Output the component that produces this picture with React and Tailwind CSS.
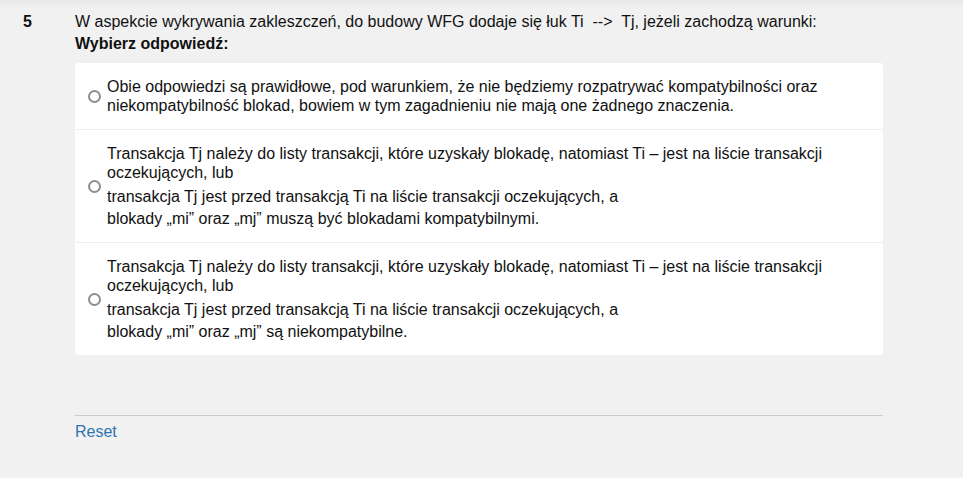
const options = [
  {
    first: "Obie odpowiedzi są prawidłowe, pod warunkiem, że nie będziemy rozpatrywać kompatybilności oraz niekompatybilność blokad, bowiem w tym zagadnieniu nie mają one żadnego znaczenia.",
    rest: [],
  },
  {
    first: "Transakcja Tj należy do listy transakcji, które uzyskały blokadę, natomiast Ti – jest na liście transakcji oczekujących, lub",
    rest: [
      "transakcja Tj jest przed transakcją Ti na liście transakcji oczekujących, a",
      "blokady „mi” oraz „mj” muszą być blokadami kompatybilnymi.",
    ],
  },
  {
    first: "Transakcja Tj należy do listy transakcji, które uzyskały blokadę, natomiast Ti – jest na liście transakcji oczekujących, lub",
    rest: [
      "transakcja Tj jest przed transakcją Ti na liście transakcji oczekujących, a",
      "blokady „mi” oraz „mj” są niekompatybilne.",
    ],
  },
];

function Radio() {
  return (
    <span className="block h-[13px] w-[13px] shrink-0 rounded-full border-2 border-[#8d8d8d] bg-white" />
  );
}

export default function App() {
  return (
    <div className="min-h-[478px] w-full bg-[#f1f1f1] bg-[linear-gradient(to_bottom,#e7e7e7_0px,#f1f1f1_9px)] font-['Liberation_Sans',Arial,sans-serif] text-[16px] leading-[19px] text-[#111111]">
      <div className="flex pl-[23px] pt-[12px]">
        {/* Question number */}
        <div className="w-[52px] shrink-0 font-bold">5</div>

        <div className="w-[808px]">
          <p>
            W aspekcie wykrywania zakleszczeń, do budowy WFG dodaje się łuk Ti&nbsp; --&gt;&nbsp; Tj, jeżeli zachodzą warunki:
          </p>
          <p className="mt-[3px] font-bold">Wybierz odpowiedź:</p>

          {/* Answers */}
          <div className="mt-[10px] rounded-[3px] bg-white">
            {options.map((opt, i) => (
              <label
                key={i}
                className={`flex items-center gap-[6px] py-[14px] pl-[13px] pr-[13px] ${i > 0 ? "border-t border-[#efefef]" : ""}`}
              >
                <Radio />
                <div className="flex-1">
                  <p>{opt.first}</p>
                  {opt.rest.map((line, j) => (
                    <p key={j} className={j === 0 ? "mt-[5px]" : "mt-[3px]"}>
                      {line}
                    </p>
                  ))}
                </div>
              </label>
            ))}
          </div>

          {/* Footer */}
          <div className="mt-[60px] border-t border-[#cccccc] pt-[6px]">
            <a href="#" className="text-[#2f74b0]">
              Reset
            </a>
          </div>
        </div>
      </div>
    </div>
  );
}
